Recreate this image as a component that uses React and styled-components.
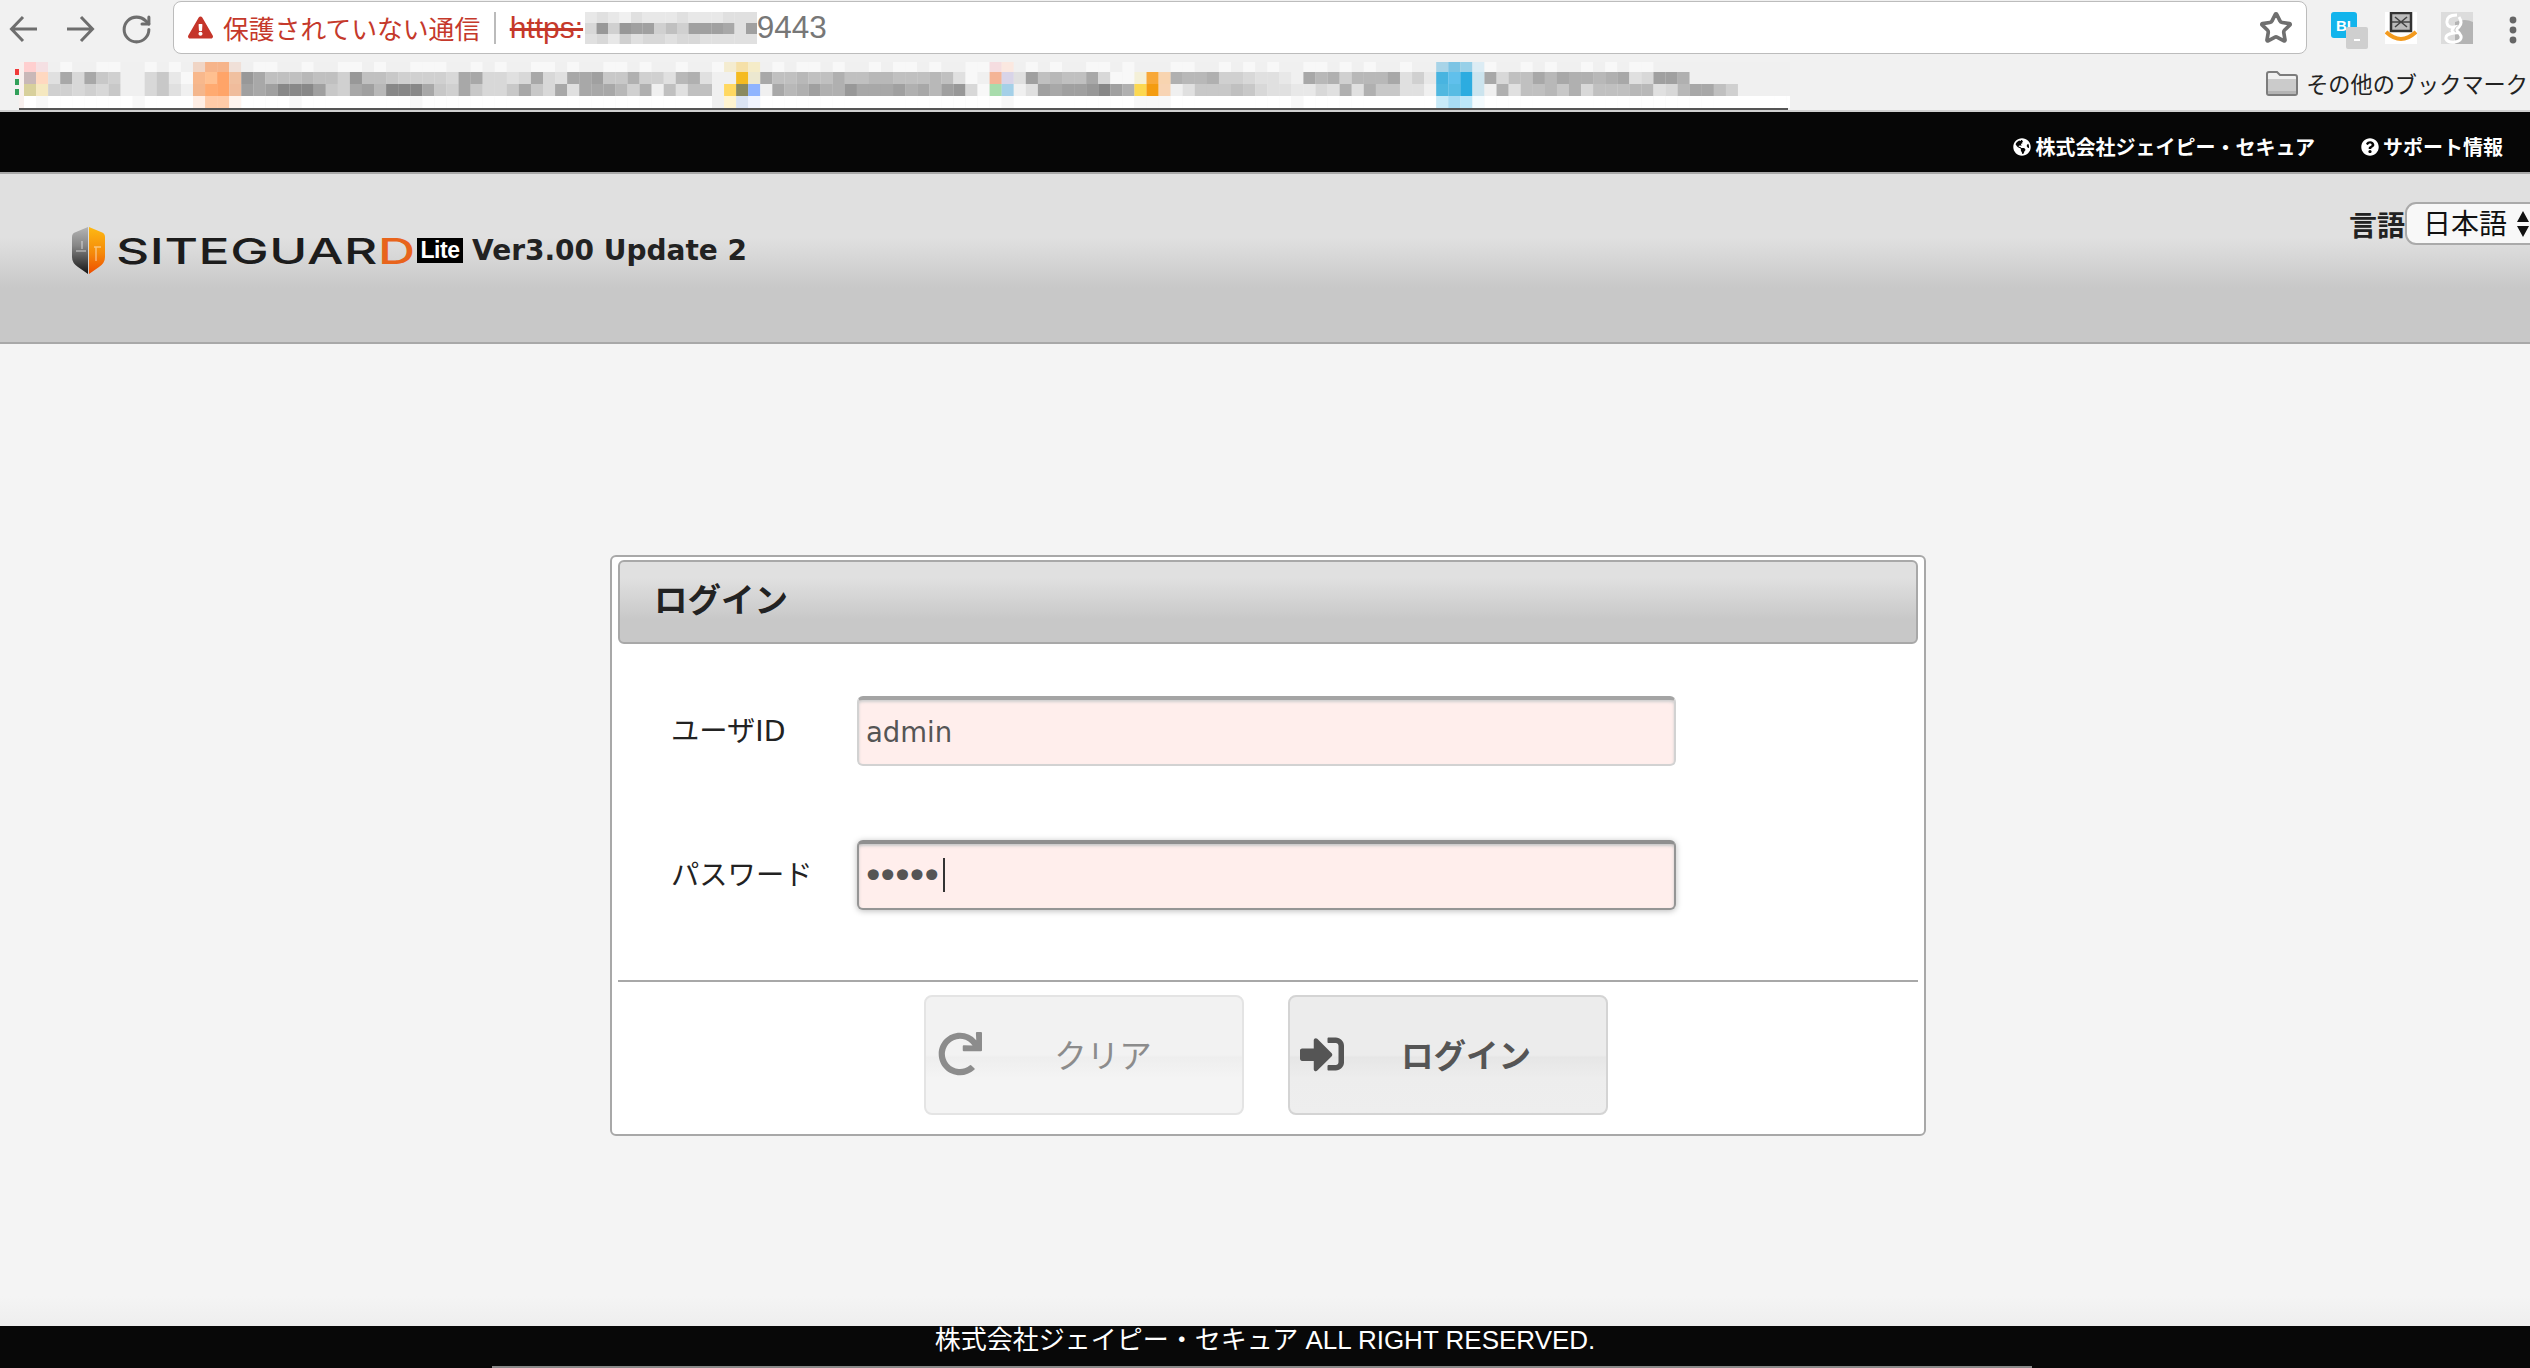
import React from "react";
import styled, { createGlobalStyle } from "styled-components";
import { RotateCw, Star } from "lucide-react";
import { FaGlobeAmericas, FaQuestionCircle, FaRedo, FaSignInAlt, FaExclamationTriangle } from "react-icons/fa";

const Global = createGlobalStyle`
  html, body { margin: 0; padding: 0; height: 100%; overflow: hidden; background: #f4f4f4; }
  * { box-sizing: border-box; }
  body { font-family: "Liberation Sans", "Noto Sans CJK JP", sans-serif; }
`;

const JP = `"Noto Sans CJK JP", sans-serif`;
const LATIN_JP = `"DejaVu Sans", "Noto Sans CJK JP", sans-serif`;

const Page = styled.div`
  width: 2530px; height: 1368px; display: flex; flex-direction: column; overflow: hidden;
`;

/* browser chrome */
const Chrome = styled.div`
  height: 112px; background: #f1f1f1; border-bottom: 2px solid #cfcfcf; display: flex; flex-direction: column; flex: none;
`;
const Toolbar = styled.div`
  height: 58px; display: flex; align-items: flex-start; padding: 1px 0 0 9px;
`;
const NavIcons = styled.div`
  display: flex; align-items: center; gap: 26px; width: 164px; height: 36px; margin-top: 10px; color: #6e6e6e; flex: none;
`;
const ReloadBox = styled.span`
  display: flex; margin-left: -1px;
`;
const AddressBar = styled.div`
  width: 2134px; height: 53px; background: #fff; border: 1.5px solid #bcbcbc; border-radius: 8px;
  display: flex; align-items: center; padding: 0 13px 0 14px; flex: none;
`;
const Warning = styled.span`
  color: #c5352a; font-size: 25px; display: flex; margin-right: 10px; flex: none;
`;
const Insecure = styled.span`
  font-family: ${JP}; font-size: 25.8px; color: #c5392b; white-space: nowrap; line-height: 1;
`;
const Sep = styled.span`
  width: 1.5px; height: 32px; background: #bbb; margin: 0 14px 0 14px; flex: none;
`;
const Scheme = styled.span`
  font-size: 30px; color: #c5392b; text-decoration: line-through; line-height: 1; width: 75px; flex: none;
`;
const Port = styled.span`
  font-size: 31.5px; color: #777; line-height: 1;
`;
const StarWrap = styled.span`
  margin-left: auto; color: #6f6f6f; display: flex;
`;
const Extensions = styled.div`
  flex: 1; display: flex; align-items: flex-start; padding: 11px 0 0 24px; position: relative;
`;
const Ext = styled.svg`
  display: block; flex: none; margin-right: ${(p) => p.$gap || 0}px;
`;
const BookmarkBar = styled.div`
  flex: 1; display: flex; justify-content: space-between; padding: 4px 0 0 15px;
`;
const OtherMarks = styled.div`
  display: flex; align-items: center; height: 42px; gap: 8px; padding-right: 2px;
  font-family: ${JP}; font-size: 22.2px; color: #222; white-space: nowrap;
`;

/* site top bar */
const TopBar = styled.div`
  height: 62px; flex: none; background: #060606; border-bottom: 2px solid #a8a8a8;
  display: flex; justify-content: flex-end; align-items: center; gap: 46px; padding: 10px 27px 0 0;
`;
const TopLink = styled.a`
  display: flex; align-items: center; gap: 4px; color: #fff; font-family: ${JP}; font-weight: 700;
  font-size: 20px; line-height: 1; white-space: nowrap;
`;

/* site header */
const Header = styled.header`
  height: 170px; flex: none; display: flex; justify-content: space-between; align-items: flex-start;
  background: linear-gradient(#e0e0e0 38%, #c8c8c8 68%); border-bottom: 2px solid #a8a8a8; padding: 53px 0 0 72px;
`;
const Brand = styled.div`
  display: flex; align-items: center;
`;
const Word = styled.span`
  display: inline-block; width: 301px; font-family: Inter, sans-serif; font-size: 36px; font-weight: 500; line-height: 1;
  color: #1c1c1c; transform: scaleX(1.43); transform-origin: left center; letter-spacing: 0.4px; white-space: nowrap;
  margin-left: 11px;
`;
const WordD = styled.span`
  color: #e8641c;
`;
const Lite = styled.span`
  background: #000; color: #fff; width: 46px; height: 25px; font-size: 23px; font-weight: 700; line-height: 25px;
  font-family: "Liberation Sans", sans-serif; text-align: center; flex: none; letter-spacing: -0.5px; margin-right: 9px;
`;
const Version = styled.span`
  font-family: "DejaVu Sans", sans-serif; font-weight: 700; font-size: 28px; color: #222; line-height: 1; white-space: nowrap;
`;
const Lang = styled.div`
  display: flex; align-items: center; margin-top: -25px; margin-right: -10px;
`;
const LangLabel = styled.span`
  font-family: ${JP}; font-size: 28px; color: #222; font-weight: 700; line-height: 1;
`;
const LangSelect = styled.div`
  width: 135px; height: 43px; background: #f8f8f8; border: 2px solid #aaa; border-radius: 11px;
  display: flex; align-items: center; gap: 9px; padding: 0 0 3px 16px; font-family: ${JP}; font-size: 28px; color: #111; line-height: 1;
`;

/* main */
const Main = styled.main`
  flex: 1; background: linear-gradient(#f4f4f4 calc(100% - 30px), #eeeeee); padding-top: 211px; display: flex; justify-content: center;
`;
const Panel = styled.section`
  width: 1316px; height: 581px; background: #fff; border: 2px solid #a8a8a8; border-radius: 6px; padding: 3px 6px;
  margin-left: 6px;
`;
const PanelTitle = styled.h2`
  margin: 0; height: 84px; display: flex; align-items: center; padding: 0 0 8px 34px;
  background: linear-gradient(#e0e0e0 20%, #c8c8c8 72%); border: 2px solid #a8a8a8; border-radius: 6px;
  font-family: ${JP}; font-weight: 700; font-size: 33.5px; color: #222; line-height: 1;
`;
const Form = styled.div`
  display: flex; flex-direction: column; gap: 74px; padding: 52px 0 70px 53px; border-bottom: 2px solid #a8a8a8;
`;
const Row = styled.div`
  display: flex; align-items: center;
`;
const Label = styled.label`
  width: 186px; flex: none; padding-top: 2px; font-family: ${LATIN_JP}; font-size: 28.3px; color: #222; line-height: 1;
`;
const FieldWrap = styled.div`
  position: relative; width: 819px; height: 70px; flex: none;
`;
const Field = styled.input`
  width: 100%; height: 100%; background: #ffeeec; border-radius: 6px; padding: 0 0 0 ${(p) => (p.type === "password" ? 3 : 7)}px; outline: none; color: #555;
  font-family: "DejaVu Sans", sans-serif; font-size: ${(p) => (p.type === "password" ? 38 : 27.5)}px;
  letter-spacing: ${(p) => (p.type === "password" ? "-7.8px" : "0")};
  border: 2px solid ${(p) => (p.$focused ? "#959595" : "#d2d2d2")};
  border-top: 4px solid ${(p) => (p.$focused ? "#8f8f8f" : "#a4a4a4")};
  box-shadow: ${(p) => (p.$focused ? "0 1px 6px #bbb, inset 0 2px 3px #c8c8c8" : "inset 0 2px 3px #cfcfcf")};
`;
const Caret = styled.span`
  position: absolute; left: 86px; top: 18px; width: 2px; height: 34px; background: #333;
`;
const Actions = styled.div`
  display: flex; justify-content: center; gap: 44px; padding: 13px 4px 0 0;
`;
const Btn = styled.button`
  width: 320px; height: 120px; display: flex; align-items: center; padding: 0 18px 2px ${(p) => (p.$primary ? 9 : 11)}px;
  border-radius: 8px; font-family: ${JP}; font-size: 32.5px; line-height: 1; cursor: pointer;
  font-weight: ${(p) => (p.$primary ? 700 : 400)};
  color: ${(p) => (p.$primary ? "#555" : "#8c8c8c")};
  border: 2px solid ${(p) => (p.$primary ? "#d4d4d4" : "#e4e4e4")};
  background: ${(p) =>
    p.$primary
      ? "linear-gradient(#ececec 50%, #e6e6e6 52%, #ededed 70%, #eeeeee)"
      : "linear-gradient(#f2f2f2 50%, #eeeeee 52%, #f4f4f4 70%, #f4f4f4)"};
`;
const BtnLabel = styled.span`
  flex: 1; text-align: center;
`;
const IconBox = styled.span`
  display: flex; flex: none; width: 45px; justify-content: center;
`;

/* footer */
const Footer = styled.footer`
  height: 42px; flex: none; background: #080808; display: flex; flex-direction: column;
`;
const Copy = styled.div`
  height: 40px; text-align: center; color: #fff; font-family: "Liberation Sans", "Noto Sans CJK JP", sans-serif;
  font-size: 26px; line-height: 18px; padding-top: 5px; white-space: nowrap; overflow: hidden;
`;
const FootEdge = styled.div`
  width: 1540px; height: 2px; background: #8a8a8a; margin-left: 492px;
`;

/* mosaic data: one hex digit is a grey step, colours are listed apart */
const rows = [
  "xxefeeffeefefe" + "xxxx" + "effeefeeffefeefffeefefeeffefeeffefeefeefx" + "xx" + "efeffefeefef" + "fefeeff" + "xx" + "efefeeffef" + "eee" + "ffeefefefeeffefefeefee" + "xxxx" + "feefefeefefeffeee" + "eeeeeeeee",
  "xxc5b59aeeb9df" + "xxxx" + "35888788a388" + "9aaaab55bbcb5bc554996aac76cee" + "xx" + "588788688778" + "8878cfe" + "xx" + "c487885bff" + "xxx" + "6776aabccde576a7775cad" + "xxxx" + "5b885756676" + "5cb446eeeeeeeee",
  "xxaabab9eeb9ce" + "xxxx" + "45411149a54711159a59bb959b5c5557a6e8c88eex" + "xx" + "576466355546" + "5743bfe" + "xx" + "c45443146e" + "xxx" + "c99989bccddbc6c699ccee" + "xxxx" + "6c88796b88877cb7558aeeeeee",
  "gfgggggggfgggg" + "xxxx" + "ggggfgggggggggfggggggggggggggggggggggggxx".slice(0, 41) + "xx" + "gggggggggggg" + "ggggggg" + "gf" + "gggggggggg" + "fff" + "ggggggggggfgggggggggggg".slice(0, 22) + "xxxx" + "gggggggggggggggggggggggggg",
];
const tints = {
  "0:0": "#ffcfcf", "0:1": "#f5e0e3", "0:14": "#f0d5c5", "0:15": "#f6b48a", "0:16": "#f6b48a", "0:17": "#f0e0d8",
  "0:58": "#f4ecd0", "0:59": "#f5e0a8", "0:60": "#f5ecc8", "0:80": "#f5dde0", "0:81": "#fbe8e0",
  "0:117": "#a8d4e8", "0:118": "#7cc4e4", "0:119": "#98d0e8", "0:120": "#dcecf4",
  "1:0": "#c9b8b8", "1:1": "#ffd8c0", "1:14": "#f8b88c", "1:15": "#ffc090", "1:16": "#ffa468", "1:17": "#f0c0a0",
  "1:59": "#f5bb20", "1:60": "#ece8d0", "1:80": "#f4b496", "1:81": "#d8d4e8", "1:92": "#f4f0d8", "1:93": "#f8a838", "1:94": "#f8d4b0",
  "1:117": "#48b4e0", "1:118": "#60c0ec", "1:119": "#2cace0", "1:120": "#cce4ee",
  "2:0": "#d8d09c", "2:1": "#f5e8c0", "2:14": "#f4b68c", "2:15": "#ffaa70", "2:16": "#ffa468", "2:17": "#f0bc9c",
  "2:58": "#ffd860", "2:59": "#8a8a60", "2:60": "#8fb4ff", "2:80": "#a8dcac", "2:81": "#a4d0e8", "2:92": "#fcd850", "2:93": "#f49c10", "2:94": "#f8d4b4",
  "2:117": "#50b8e0", "2:118": "#58bce4", "2:119": "#2cace0", "2:120": "#cce4ee",
  "3:14": "#ffeee4", "3:15": "#ffcba8", "3:16": "#ffcba8", "3:17": "#fff4ee", "3:58": "#fff4d0", "3:59": "#dbe4f4", "3:60": "#f0f4ff",
  "3:117": "#c8eaf8", "3:118": "#a8dcf4", "3:119": "#bce6f8", "3:120": "#f4fbfe",
};
const grey = (c) => {
  const v = Math.min(255, 128 + parseInt(c, 17) * 8);
  return `rgb(${v},${v},${v})`;
};
const ROW_Y = [0, 10, 22, 34];
const ROW_H = [10, 12, 12, 12];

function Mosaic() {
  const cells = [];
  rows.forEach((r, ri) => {
    [...r].slice(0, 147).forEach((c, ci) => {
      const fill = tints[`${ri}:${ci}`] || (c === "x" ? "#f0f0f0" : grey(c));
      cells.push(<rect key={`${ri}-${ci}`} x={9 + ci * 12.07} y={ROW_Y[ri]} width="12.2" height={ROW_H[ri]} fill={fill} />);
    });
  });
  return (
    <svg width="1775" height="48" style={{ display: "block", flex: "none" }}>
      <rect x="4" y="0" width="5" height="46" fill="#f8f0ee" />
      <rect x="0" y="7" width="4" height="6" fill="#f03a3a" />
      <rect x="0" y="17" width="4" height="6" fill="#32a05a" />
      <rect x="0" y="27" width="4" height="6" fill="#32a05a" />
      {cells}
      <rect x="4" y="46" width="1769" height="2" fill="#555" />
    </svg>
  );
}

const urlBlur = ["dcdecdddcdddccc", "b3a344a8a4445c4", "cbdacbbcbbccccc"];
function UrlBlur() {
  return (
    <svg width="172" height="32" style={{ display: "block", flex: "none" }}>
      {urlBlur.map((r, ri) =>
        [...r].map((c, ci) => (
          <rect key={`${ri}-${ci}`} x={ci * 11.5} y={ri * 11} width="11.7" height="11" fill={grey(c)} />
        ))
      )}
    </svg>
  );
}

const NavArrow = ({ flip }) => (
  <svg width="30" height="30" viewBox="0 0 30 30" style={{ display: "block", flex: "none", transform: flip ? "scaleX(-1)" : "none" }}>
    <path d="M28 15 H3 M14 3 L2.5 15 L14 27" fill="none" stroke="#6e6e6e" strokeWidth="3" />
  </svg>
);

const Shield = () => (
  <svg width="33" height="47" viewBox="0 0 33 47" style={{ display: "block", flex: "none" }}>
    <defs>
      <linearGradient id="sl" x1="0" y1="0" x2="0" y2="1">
        <stop offset="0" stopColor="#b4b4b4" /><stop offset="0.4" stopColor="#858585" /><stop offset="1" stopColor="#141414" />
      </linearGradient>
      <linearGradient id="sr" x1="0" y1="0" x2="0" y2="1">
        <stop offset="0" stopColor="#fdb913" /><stop offset="0.55" stopColor="#f58a0a" /><stop offset="1" stopColor="#ee4d00" />
      </linearGradient>
    </defs>
    <path d="M16 0 L4 5 Q0 6 0 10 V30 Q0 36 6 40 L16 47 Z" fill="url(#sl)" />
    <path d="M17 0 L29 5 Q33 6 33 10 V30 Q33 36 27 40 L17 47 Z" fill="url(#sr)" />
    <path d="M10 14 V22 M4 24 H14 M22 20 H29 M24 20 V34" stroke="#fff" strokeOpacity=".45" strokeWidth="1.5" fill="none" />
  </svg>
);

const Folder = () => (
  <svg width="32" height="25" viewBox="0 0 32 25">
    <path d="M1 3 Q1 1 3 1 H11 L14 4 H29 Q31 4 31 6 V22 Q31 24 29 24 H3 Q1 24 1 22 Z" fill="#f0f0f0" stroke="#7c7c7c" strokeWidth="2" />
    <rect x="2" y="8" width="28" height="12" fill="#cbcbcb" />
    <rect x="2" y="20" width="28" height="3" fill="#b4b4b4" />
  </svg>
);

const BlIcon = () => (
  <Ext width="38" height="38" viewBox="0 0 38 38" $gap={16}>
    <rect x="0" y="0" width="26" height="26" rx="3" fill="#12b4ec" />
    <text x="5" y="19" fontFamily="Liberation Sans" fontWeight="700" fontSize="15" fill="#fff">BL</text>
    <rect x="15" y="15" width="22" height="22" rx="2" fill="#cfcfcf" />
    <rect x="23" y="27" width="6" height="2" fill="#fff" />
  </Ext>
);
const AmazonIcon = () => (
  <Ext width="32" height="32" viewBox="0 0 32 32" $gap={24}>
    <rect width="32" height="32" fill="#fff" />
    <rect x="6" y="1" width="20" height="18" fill="#bbb" stroke="#333" strokeWidth="2.5" />
    <path d="M10 5 L22 15 M22 5 L10 15 M7 10 H25" stroke="#444" strokeWidth="1.6" />
    <path d="M1 20 Q16 34 31 20" stroke="#f39a1e" strokeWidth="4" fill="none" />
  </Ext>
);
const GIcon = () => (
  <Ext width="32" height="32" viewBox="0 0 32 32" $gap={36}>
    <rect width="32" height="32" fill="#dcdcdc" />
    <path d="M14 10 Q24 6 32 10 V32 H14 Z" fill="#b4b4b4" />
    <path d="M16 3 Q5 3 6 11 Q7 16 13 15 Q9 19 13 21 Q4 22 5 27 Q7 31 14 30 Q21 29 20 24 Q19 21 16 19 Q15 17 18 15 Q22 11 18 5" fill="none" stroke="#fff" strokeWidth="3" />
  </Ext>
);
const Kebab = () => (
  <Ext width="8" height="28" viewBox="0 0 8 28" style={{ marginTop: 4 }}>
    <circle cx="4" cy="4" r="3.4" fill="#666" /><circle cx="4" cy="14" r="3.4" fill="#666" /><circle cx="4" cy="24" r="3.4" fill="#666" />
  </Ext>
);
const UpDown = () => (
  <svg width="14" height="28" viewBox="0 0 14 28" style={{ flex: "none", display: "block", marginTop: 3 }}>
    <path d="M7 1 L13 12 H1 Z M7 27 L13 16 H1 Z" fill="#111" />
  </svg>
);

export default function App() {
  return (
    <Page>
      <Global />
      <Chrome>
        <Toolbar>
          <NavIcons>
            <NavArrow />
            <NavArrow flip />
            <ReloadBox><RotateCw size={33} strokeWidth={2.2} /></ReloadBox>
          </NavIcons>
          <AddressBar>
            <Warning><FaExclamationTriangle /></Warning>
            <Insecure>保護されていない通信</Insecure>
            <Sep />
            <Scheme>https:</Scheme>
            <UrlBlur />
            <Port>9443</Port>
            <StarWrap><Star size={34} strokeWidth={2.6} /></StarWrap>
          </AddressBar>
          <Extensions>
            <BlIcon />
            <AmazonIcon />
            <GIcon />
            <Kebab />
          </Extensions>
        </Toolbar>
        <BookmarkBar>
          <Mosaic />
          <OtherMarks>
            <Folder />
            その他のブックマーク
          </OtherMarks>
        </BookmarkBar>
      </Chrome>

      <TopBar>
        <TopLink><FaGlobeAmericas size={18} />株式会社ジェイピー・セキュア</TopLink>
        <TopLink><FaQuestionCircle size={18} />サポート情報</TopLink>
      </TopBar>

      <Header>
        <Brand>
          <Shield />
          <Word>SITEGUAR<WordD>D</WordD></Word>
          <Lite>Lite</Lite>
          <Version>Ver3.00 Update 2</Version>
        </Brand>
        <Lang>
          <LangLabel>言語</LangLabel>
          <LangSelect>日本語<UpDown /></LangSelect>
        </Lang>
      </Header>

      <Main>
        <Panel>
          <PanelTitle>ログイン</PanelTitle>
          <Form>
            <Row>
              <Label>ユーザID</Label>
              <FieldWrap><Field type="text" value="admin" readOnly /></FieldWrap>
            </Row>
            <Row>
              <Label>パスワード</Label>
              <FieldWrap>
                <Field type="password" value="admin" readOnly $focused />
                <Caret />
              </FieldWrap>
            </Row>
          </Form>
          <Actions>
            <Btn type="button">
              <IconBox><FaRedo size={44} color="#8c8c8c" /></IconBox>
              <BtnLabel>クリア</BtnLabel>
            </Btn>
            <Btn type="button" $primary>
              <IconBox><FaSignInAlt size={44} color="#555" /></IconBox>
              <BtnLabel>ログイン</BtnLabel>
            </Btn>
          </Actions>
        </Panel>
      </Main>

      <Footer>
        <Copy>株式会社ジェイピー・セキュア ALL RIGHT RESERVED.</Copy>
        <FootEdge />
      </Footer>
    </Page>
  );
}
